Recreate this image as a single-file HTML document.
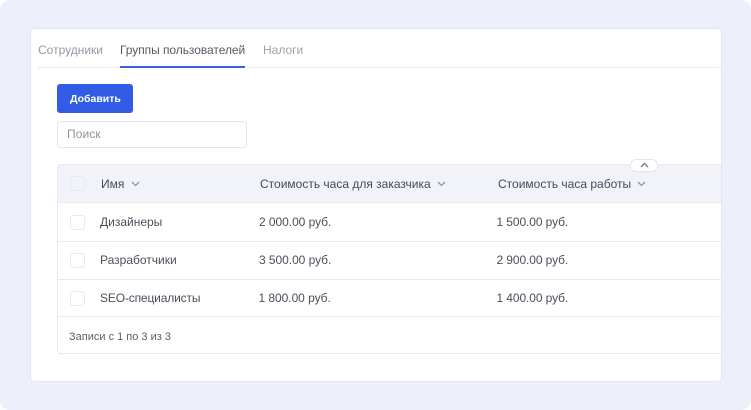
<!DOCTYPE html>
<html><head><meta charset="utf-8">
<style>
html,body{margin:0;padding:0;background:#fff}
#bg{position:absolute;left:0;top:0;width:751px;height:410px;background:#edf0fb;border-radius:10px;overflow:hidden;font-family:"Liberation Sans",sans-serif;color:#4a4f5a}
#bg div{position:absolute;box-sizing:border-box}
.t{white-space:nowrap;font-size:12px;line-height:16px;filter:blur(.3px)}
.cb{width:15px;height:15px;left:70px;background:#fff;border:1px solid #e8eaf0;border-radius:3px}
.line{left:56.500px;width:664.500px;height:1px;background:#e8eaf2}
</style></head><body>
<div id="bg">
<div style="left:29.500px;top:28px;width:692.500px;height:353.500px;background:#fff;border:1px solid #e3e6ef;border-radius:4px"></div>
<div style="left:38px;top:67px;width:683px;height:1px;background:#e9ebf1"></div>
<div style="left:120px;top:66px;width:125px;height:2px;background:#3a62e4"></div>
<div class="t" style="left:38px;top:41.500px;color:#9398a3">Сотрудники</div>
<div class="t" style="left:120px;top:41.500px;color:#555a64;letter-spacing:-.05px">Группы пользователей</div>
<div class="t" style="left:263px;top:41.500px;color:#9ea3ad">Налоги</div>
<div style="left:57px;top:84px;width:76px;height:28.500px;background:#335ce6;border-radius:3px"></div>
<div class="t" style="left:70px;top:91px;color:#fff;font-weight:700;font-size:10.500px">Добавить</div>
<div style="left:57px;top:121px;width:190px;height:27px;background:#fff;border:1px solid #e3e6ec;border-radius:4px"></div>
<div class="t" style="left:67px;top:126px;color:#8f939c;letter-spacing:.1px">Поиск</div>
<div style="left:56.500px;top:164px;width:664.500px;height:190px;background:#fff;border:1px solid #e8eaf2;border-right:0;border-radius:4px 0 0 4px"></div>
<div style="left:56.500px;top:164px;width:664.500px;height:39px;background:#f1f3f8;border:1px solid #e8eaf2;border-right:0;border-radius:4px 0 0 0"></div>
<div class="line" style="top:241px"></div>
<div class="line" style="top:279px"></div>
<div class="line" style="top:316px"></div>
<div class="cb" style="top:176px;background:#f1f3f8;border-color:#e8eaf0"></div>
<div class="cb" style="top:215px"></div>
<div class="cb" style="top:253px"></div>
<div class="cb" style="top:291px"></div>
<div class="t" style="left:101px;top:175.500px;color:#454a54">Имя</div>
<svg style="position:absolute;left:131px;top:181px" width="9" height="6" viewBox="0 0 9 6"><path d="M1 1l3.500 3.500L8 1" fill="none" stroke="#8f95a3" stroke-width="1.300"/></svg>
<div class="t" style="left:260px;top:175.500px;color:#454a54">Стоимость часа для заказчика</div>
<svg style="position:absolute;left:437px;top:181px" width="9" height="6" viewBox="0 0 9 6"><path d="M1 1l3.500 3.500L8 1" fill="none" stroke="#8f95a3" stroke-width="1.300"/></svg>
<div class="t" style="left:498px;top:175.500px;color:#454a54">Стоимость часа работы</div>
<svg style="position:absolute;left:637px;top:181px" width="9" height="6" viewBox="0 0 9 6"><path d="M1 1l3.500 3.500L8 1" fill="none" stroke="#8f95a3" stroke-width="1.300"/></svg>
<div style="left:630px;top:159px;width:28px;height:13px;background:#fff;border:1px solid #e3e6ec;border-radius:7px"></div>
<svg style="position:absolute;left:640px;top:162px" width="9" height="6" viewBox="0 0 9 6"><path d="M1 5l3.500-3.500L8 5" fill="none" stroke="#7a8192" stroke-width="1.500"/></svg>
<div class="t" style="left:100px;top:214px">Дизайнеры</div>
<div class="t" style="left:259px;top:214px;letter-spacing:-.05px">2 000.00 руб.</div>
<div class="t" style="left:496.500px;top:214px;letter-spacing:-.1px">1 500.00 руб.</div>
<div class="t" style="left:100px;top:252px">Разработчики</div>
<div class="t" style="left:259px;top:252px;letter-spacing:-.05px">3 500.00 руб.</div>
<div class="t" style="left:496.500px;top:252px;letter-spacing:-.1px">2 900.00 руб.</div>
<div class="t" style="left:100px;top:290px;letter-spacing:-.15px">SEO-специалисты</div>
<div class="t" style="left:258.500px;top:290px;letter-spacing:-.05px">1 800.00 руб.</div>
<div class="t" style="left:496.500px;top:290px;letter-spacing:-.1px">1 400.00 руб.</div>
<div class="t" style="left:69px;top:328.500px;font-size:11px;color:#5a5f69">Записи с 1 по 3 из 3</div>
</div>
</body></html>
